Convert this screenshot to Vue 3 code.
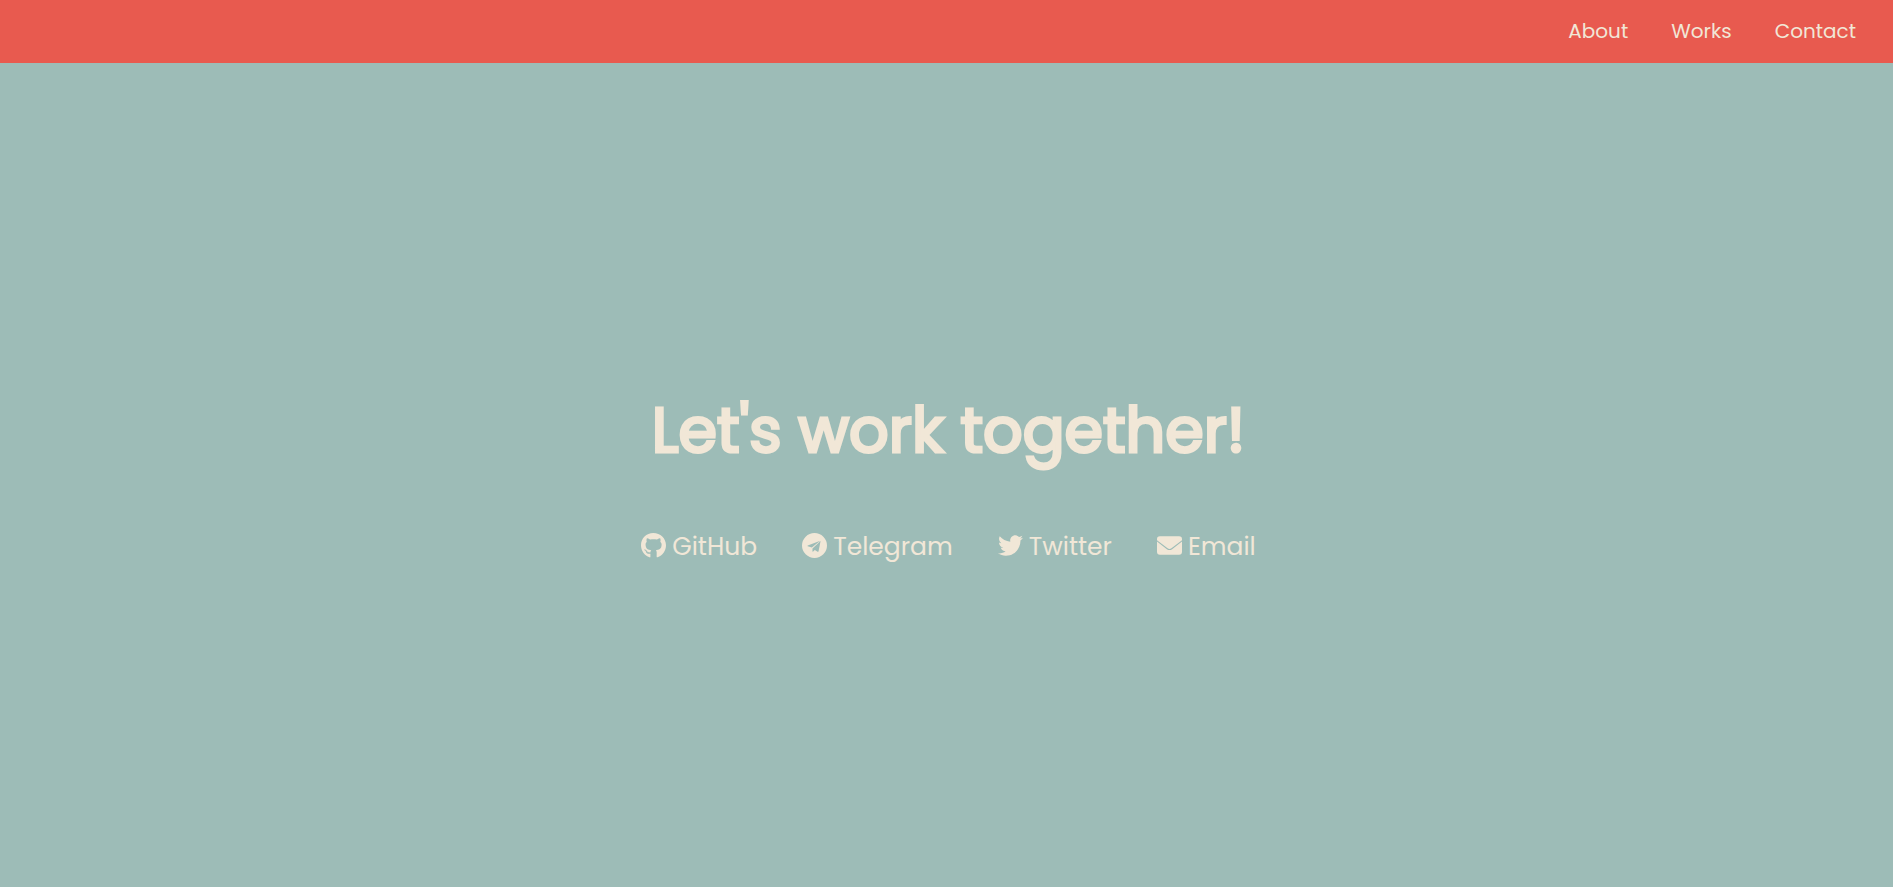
<script setup>
const pages = ['About', 'Works', 'Contact']

const contacts = [
  {
    label: 'GitHub',
    href: '#github',
    viewBox: '0 8 496 496',
    path: 'M165.9 397.4c0 2-2.3 3.6-5.2 3.6-3.3.3-5.6-1.3-5.6-3.6 0-2 2.3-3.6 5.2-3.6 3-.3 5.6 1.3 5.6 3.6zm-31.1-4.5c-.7 2 1.3 4.3 4.3 4.9 2.6 1 5.6 0 6.2-2s-1.3-4.3-4.3-5.2c-2.6-.7-5.5.3-6.2 2.3zm44.2-1.7c-2.9.7-4.9 2.6-4.6 4.9.3 2 2.9 3.3 5.9 2.6 2.9-.7 4.9-2.6 4.6-4.6-.3-1.9-3-3.2-5.9-2.9zM244.8 8C106.1 8 0 113.3 0 252c0 110.9 69.8 205.8 169.5 239.2 12.8 2.3 17.3-5.6 17.3-12.1 0-6.2-.3-40.4-.3-61.4 0 0-70 15-84.7-29.8 0 0-11.4-29.1-27.8-36.6 0 0-22.9-15.7 1.6-15.4 0 0 24.9 2 38.6 25.8 21.9 38.6 58.6 27.5 72.9 20.9 2.3-16 8.8-27.1 16-33.7-55.9-6.2-112.3-14.3-112.3-110.5 0-27.5 7.6-41.3 23.6-58.9-2.6-6.5-11.1-33.3 2.6-67.9 20.9-6.5 69 27 69 27 20-5.6 41.5-8.5 62.8-8.5s42.8 2.9 62.8 8.5c0 0 48.1-33.6 69-27 13.7 34.7 5.2 61.4 2.6 67.9 16 17.7 25.8 31.5 25.8 58.9 0 96.5-58.9 104.2-114.8 110.5 9.2 7.9 17 22.9 17 46.4 0 33.7-.3 75.4-.3 83.6 0 6.5 4.6 14.4 17.3 12.1C428.2 457.8 496 362.9 496 252 496 113.3 383.5 8 244.8 8zM97.2 352.9c-1.3 1-1 3.3.7 5.2 1.6 1.6 3.9 2.3 5.2 1 1.3-1 1-3.3-.7-5.2-1.6-1.6-3.9-2.3-5.2-1zm-10.8-8.1c-.7 1.3.3 2.9 2.3 3.9 1.6 1 3.6.7 4.3-.7.7-1.3-.3-2.9-2.3-3.9-2-.6-3.6-.3-4.3.7zm32.4 35.6c-1.6 1.3-1 4.3 1.3 6.2 2.3 2.3 5.2 2.6 6.5 1 1.3-1.3.7-4.3-1.3-6.2-2.2-2.3-5.2-2.6-6.5-1zm-11.4-14.7c-1.6 1-1.6 3.6 0 5.9 1.6 2.3 4.3 3.3 5.6 2.3 1.6-1.3 1.6-3.9 0-6.2-1.4-2.3-4-3.3-5.6-2z'
  },
  {
    label: 'Telegram',
    href: '#telegram',
    viewBox: '0 0 74 74',
    path: 'M37 0a37 37 0 1 0 0 74a37 37 0 1 0 0-74zM17 37L54 23L29 43L17 39.500q-2-1 0-2.500zM55 24L49 54q-1 3-4 1L38 50L33 55q-2 1-2-1V46z'
  },
  {
    label: 'Twitter',
    href: '#twitter',
    viewBox: '0 0 512 512',
    path: 'M459.37 151.716c.325 4.548.325 9.097.325 13.645 0 138.72-105.583 298.558-298.558 298.558-59.452 0-114.68-17.219-161.137-47.106 8.447.974 16.568 1.299 25.34 1.299 49.055 0 94.213-16.568 130.274-44.832-46.132-.975-84.792-31.188-98.112-72.772 6.498.974 12.995 1.624 19.818 1.624 9.421 0 18.843-1.3 27.614-3.573-48.081-9.747-84.143-51.98-84.143-102.985v-1.299c13.969 7.797 30.214 12.67 47.431 13.319-28.264-18.843-46.781-51.005-46.781-87.391 0-19.492 5.197-37.36 14.294-52.954 51.655 63.675 129.3 105.258 216.365 109.807-1.624-7.797-2.599-15.918-2.599-24.04 0-57.828 46.782-104.934 104.934-104.934 30.213 0 57.502 12.67 76.67 33.137 23.715-4.548 46.456-13.32 66.599-25.34-7.798 24.366-24.366 44.833-46.132 57.827 21.117-2.273 41.584-8.122 60.426-16.243-14.292 20.791-32.161 39.308-52.628 54.253z'
  },
  {
    label: 'Email',
    href: '#email',
    viewBox: '0 -3.5 26 26',
    path: 'M0 4V3a3 3 0 0 1 3-3h20a3 3 0 0 1 3 3v1L15 12.300q-2 1.600-4 0zM0 5.300L10.300 13.300q2.700 1.900 5.400 0L26 5.300V16a3 3 0 0 1-3 3H3a3 3 0 0 1-3-3z'
  }
]
</script>

<template>
  <div class="page">
    <header class="bar">
      <nav class="nav" aria-label="Main">
        <a v-for="page in pages" :key="page" :href="'#' + page.toLowerCase()">{{ page }}</a>
      </nav>
    </header>
    <main class="contact">
      <h1>Let's work together!</h1>
      <ul class="links">
        <li v-for="item in contacts" :key="item.label">
          <a :href="item.href">
            <svg class="icon" :viewBox="item.viewBox" aria-hidden="true">
              <path fill-rule="evenodd" :d="item.path" />
            </svg>
            <span>{{ item.label }}</span>
          </a>
        </li>
      </ul>
    </main>
  </div>
</template>

<style>
body {
  margin: 0;
  background: #9dbcb7;
}
</style>

<style scoped>
.page {
  display: flex;
  flex-direction: column;
  min-height: 100vh;
  background: #9dbcb7;
  color: #f1e7d7;
  font-family: Poppins, Inter, sans-serif;
}

.bar {
  background: #e85a4f;
}

.nav {
  display: flex;
  justify-content: flex-end;
  gap: 43px;
  padding: 16px 37px 17px;
  font-size: 20px;
  line-height: 30px;
}

a {
  color: inherit;
  text-decoration: none;
}

.contact {
  flex: 1;
  display: flex;
  flex-direction: column;
  align-items: center;
  justify-content: center;
  gap: 50px;
  padding-left: 4px;
}

h1 {
  margin: 0;
  font-size: 62px;
  font-weight: 400;
  line-height: 94px;
  text-align: center;
  -webkit-text-stroke: 3px currentColor;
}

.links {
  display: flex;
  flex-wrap: wrap;
  justify-content: center;
  gap: 45px;
  margin: 0;
  padding: 0;
  list-style: none;
  font-size: 25px;
  line-height: 38px;
}

.links a {
  display: block;
  white-space: nowrap;
}

.icon {
  width: 25px;
  height: 25px;
  margin-right: 6px;
  vertical-align: -3px;
  fill: currentColor;
}
</style>
